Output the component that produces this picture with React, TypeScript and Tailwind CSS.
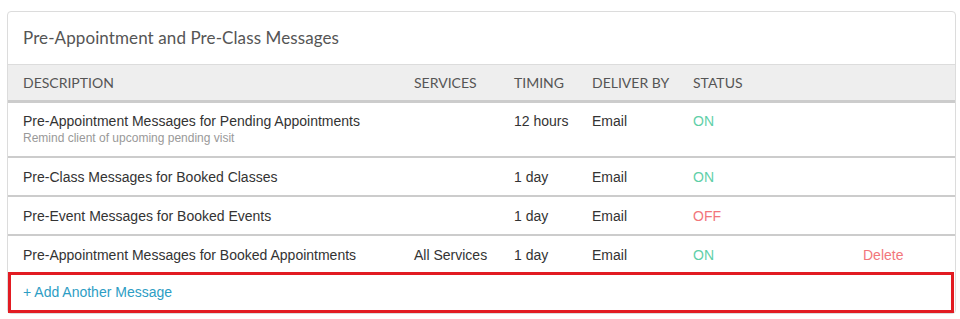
import React from 'react'

type Row = {
  title: string
  sub?: string
  services?: string
  timing: string
  deliver: string
  on: boolean
  canDelete?: boolean
}

const rows: Row[] = [
  {
    title: 'Pre-Appointment Messages for Pending Appointments',
    sub: 'Remind client of upcoming pending visit',
    timing: '12 hours',
    deliver: 'Email',
    on: true,
  },
  { title: 'Pre-Class Messages for Booked Classes', timing: '1 day', deliver: 'Email', on: true },
  { title: 'Pre-Event Messages for Booked Events', timing: '1 day', deliver: 'Email', on: false },
  {
    title: 'Pre-Appointment Messages for Booked Appointments',
    services: 'All Services',
    timing: '1 day',
    deliver: 'Email',
    on: true,
    canDelete: true,
  },
]

const cols = 'grid grid-cols-[391px_100px_78px_101px_170px_1fr] px-[15px]'
const heading = { fontFamily: 'Lato, "Open Sans", sans-serif' }
const body = { fontFamily: '"Liberation Sans", Arial, sans-serif' }

export default function App() {
  return (
    <div className="bg-white w-[960px] h-[319px] pt-[11px] pl-[7px] pr-[4px]">
      <div className="border border-[#dcdcdc] rounded-[4px] bg-white">
        {/* Title */}
        <div className="h-[53px] flex items-center px-[15px] border-b border-[#dcdcdc]">
          <h2 className="text-[17px] text-[#555] tracking-[0.1px]" style={heading}>
            Pre-Appointment and Pre-Class Messages
          </h2>
        </div>

        {/* Column headers */}
        <div
          className={`${cols} h-[38px] items-center bg-[#eeeeee] border-b-[3px] border-[#cccccc] text-[14px] text-[#555] uppercase`}
          style={heading}
        >
          <span>Description</span>
          <span>Services</span>
          <span>Timing</span>
          <span>Deliver By</span>
          <span>Status</span>
          <span />
        </div>

        {/* Rows */}
        <div style={body}>
          {rows.map((r, i) => (
            <div
              key={r.title}
              className={`${cols} text-[14px] leading-[20px] text-[#333] ${
                r.sub ? 'pt-[8px] h-[55px]' : 'pt-[9px]'
              } ${i < rows.length - 1 ? 'border-b-[2px] border-[#cccccc]' : ''} ${
                !r.sub && i < rows.length - 1 ? 'h-[39px]' : ''
              } ${i === rows.length - 1 ? 'h-[36px]' : ''}`}
            >
              <div>
                <div>{r.title}</div>
                {r.sub && <div className="text-[12px] text-[#999] leading-[14px]">{r.sub}</div>}
              </div>
              <span>{r.services ?? ''}</span>
              <span>{r.timing}</span>
              <span>{r.deliver}</span>
              <span className={r.on ? 'text-[#5fcfa8]' : 'text-[#f2767b]'}>{r.on ? 'ON' : 'OFF'}</span>
              <span className="text-[#f2767b]">{r.canDelete ? 'Delete' : ''}</span>
            </div>
          ))}

          {/* Add link, highlighted */}
          <div className="h-[41px] flex items-center border-[3px] border-[#e21b22] mr-[1px] pl-[12px]">
            <a href="#" className="text-[14px] text-[#2d9dc4]">
              + Add Another Message
            </a>
          </div>
        </div>
      </div>
    </div>
  )
}
